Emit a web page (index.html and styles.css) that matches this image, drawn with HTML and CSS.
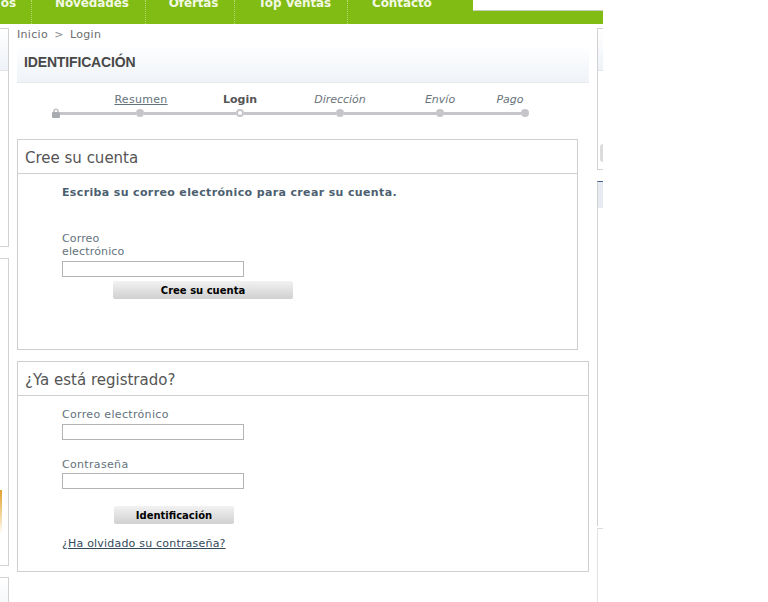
FILE: index.html
```html
<!DOCTYPE html>
<html>
<head>
  <meta charset="utf-8">
  <title>Login</title>
  <link rel="stylesheet" href="styles.css">
</head>
<body>
  <div class="page">
    <div class="nav">
      <a class="nav-item first"><span>os</span></a>
      <a class="nav-item"><span>Novedades</span></a>
      <a class="nav-item"><span>Ofertas</span></a>
      <a class="nav-item"><span>Top Ventas</span></a>
      <a class="nav-item last"><span>Contacto</span></a>
      <div class="search"></div>
    </div>

    <div class="columns">
      <div class="rail left">
        <div class="box b1"><div class="box-head"></div></div>
        <div class="box b2"><div class="thumb"></div></div>
        <div class="box b3"></div>
      </div>

      <div class="main">
        <div class="crumbs">Inicio <i>&gt;</i> Login</div>
        <h1 class="title">IDENTIFICACIÓN</h1>

        <div class="step-labels">
          <a class="step done">Resumen</a>
          <b class="step">Login</b>
          <em class="step">Dirección</em>
          <em class="step">Envío</em>
          <em class="step last-step">Pago</em>
        </div>
        <div class="track">
          <svg class="lock" width="8" height="10" viewBox="0 0 8 10">
            <path d="M2 4.5V3a2 2 0 0 1 4 0v1.5" fill="none" stroke="#a8abb0" stroke-width="1.2"/>
            <rect x="0" y="4" width="8" height="6" rx="1" fill="#a8abb0"/>
          </svg>
          <span class="seg s80"></span><span class="dot"></span>
          <span class="seg s92"></span><span class="dot open"></span>
          <span class="seg s92"></span><span class="dot"></span>
          <span class="seg s92"></span><span class="dot"></span>
          <span class="seg s77"></span><span class="dot"></span>
        </div>

        <div class="panel short">
          <h2 class="panel-head">Cree su cuenta</h2>
          <div class="panel-body">
            <p class="lead">Escriba su correo electrónico para crear su cuenta.</p>
            <label class="field-label narrow">Correo electrónico</label>
            <input class="field" type="text">
            <button class="btn wide">Cree su cuenta</button>
          </div>
        </div>

        <div class="panel">
          <h2 class="panel-head">¿Ya está registrado?</h2>
          <div class="panel-body login">
            <label class="field-label">Correo electrónico</label>
            <input class="field" type="text">
            <label class="field-label second">Contraseña</label>
            <input class="field tight" type="password">
            <button class="btn small">Identificación</button>
            <a class="forgot">¿Ha olvidado su contraseña?</a>
          </div>
        </div>
      </div>

      <div class="rail right">
        <div class="rbox r1"><div class="box-head"></div><div class="side-btn"></div></div>
        <div class="rbox r2"><div class="r2-head"></div></div>
        <div class="rbox r3"></div>
      </div>
    </div>
  </div>
</body>
</html>
```

FILE: styles.css
```css
html, body { margin: 0; padding: 0; background: #fff; }
body { font-family: "DejaVu Sans", Verdana, sans-serif; font-size: 11px; color: #63727c; }
.page { width: 603px; height: 602px; overflow: hidden; }

/* top menu, the page is scrolled a little so the text is cut */
.nav { display: flex; height: 24px; background: #80bc14; overflow: hidden; }
.nav-item { display: block; height: 24px; padding: 0 16px 0 23px; border-right: 1px dotted #b5d970; color: #f2f8e4; font-weight: bold; font-size: 12px; line-height: 14px; letter-spacing: -0.12px; white-space: nowrap; }
.nav-item span { display: block; margin-top: -4px; }
.nav-item.first { width: 16px; padding: 0 15px 0 0; text-align: right; }
.nav-item.last { border-right: 0; padding-left: 24px; }
.search { height: 10px; width: 130px; margin-left: auto; background: #fff; border-bottom: 1px solid #c8d0b8; }

.columns { display: flex; }
.rail { flex: none; }
.rail.left { width: 9px; padding-top: 4px; }
.rail.right { width: 6px; padding-top: 4px; margin-left: 8px; }
.main { flex: none; width: 572px; margin-left: 8px; }

/* side columns, only the edge of them shows */
.box { box-sizing: border-box; border: 1px solid #d2d2d2; border-left: 0; margin-bottom: 11px; }
.box.b1 { height: 219px; }
.box.b2 { height: 308px; padding-top: 231px; }
.box.b3 { height: 40px; border-bottom: 0; background: linear-gradient(#fff, #f0f3f7); }
.box-head { height: 41px; background: linear-gradient(#fff, #eef2f7); border-bottom: 1px solid #e2e2e2; }
.thumb { width: 2px; height: 44px; background: linear-gradient(#e0a030, #f4d8a0 60%, #fff); }

.rbox { box-sizing: border-box; border-left: 1px solid #d2d2d2; }
.r1 { height: 142px; border-top: 1px solid #d2d2d2; border-bottom: 1px solid #d2d2d2; margin-bottom: 11px; }
.side-btn { width: 4px; height: 18px; margin: 73px 0 0 2px; background: #dcdcdc; border-radius: 3px 0 0 3px; }
.r2 { height: 345px; border-top: 1px solid #3f6288; margin-bottom: 2px; }
.r2-head { height: 26px; background: #e9ebf3; }
.r3 { height: 80px; border-top: 1px solid #dcdcdc; border-left-color: #e2e2e2; }

/* breadcrumb and title */
.crumbs { height: 14px; margin-top: 4px; line-height: 14px; color: #6c6c6c; letter-spacing: 0.3px; }
.crumbs i { font-style: normal; color: #8a8a8a; margin: 0 2.5px; }
.title { box-sizing: border-box; height: 38px; margin: 3px 0 0; padding: 8px 0 0 7px; font: bold 14px/18px "Liberation Sans", Arial, sans-serif; letter-spacing: -0.15px; color: #484848; background: linear-gradient(#fff, #eff3f8); border-bottom: 1px solid #e8eaec; }

/* steps */
.step-labels { display: flex; height: 14px; margin-top: 10px; padding-left: 73px; line-height: 14px; color: #666; }
.step { display: block; box-sizing: border-box; width: 100px; text-align: center; }
.step.done { padding-left: 2px; color: #63727c; text-decoration: underline; letter-spacing: 0.3px; }
b.step { color: #555; }
em.step { color: #6a747c; }
.step.last-step { margin-left: -15px; width: 70px; }
.track { display: flex; align-items: center; height: 10px; margin: 1px 0 0 35px; }
.lock { flex: none; margin-top: -1px; }
.seg { flex: none; height: 3px; background: #c6c6ca; }
.s80 { width: 76px; }
.s92 { width: 92px; }
.s77 { width: 77px; }
.dot { flex: none; box-sizing: border-box; width: 8px; height: 8px; border-radius: 50%; background: #c6c6ca; }
.dot.open { background: #fff; border: 2px solid #c6c6ca; }

/* boxes with forms */
.panel { box-sizing: border-box; height: 211px; margin-top: 11px; border: 1px solid #cfcfcf; }
.panel.short { width: 561px; margin-top: 21px; }
.panel-head { box-sizing: border-box; height: 34px; margin: 0; padding: 0 7px; border-bottom: 1px solid #cfcfcf; font-size: 15px; font-weight: normal; line-height: 36px; color: #555; }
.panel-body { padding: 12px 0 0 44px; }
.lead { margin: 0 0 32px; font-weight: bold; line-height: 14px; letter-spacing: 0.36px; color: #4c5f70; }
.field-label { display: block; line-height: 13px; letter-spacing: 0.33px; }
.field-label.narrow { width: 90px; letter-spacing: 0.15px; }
.field-label.second { margin-top: 18px; }
.field { display: block; box-sizing: border-box; width: 182px; height: 16px; margin: 3px 0 0; padding: 0; border: 1px solid #b4b4b4; background: #fff; }
.field.tight { margin-top: 2px; }
.btn { display: block; box-sizing: border-box; height: 18px; padding: 0; border: 0; border-radius: 2px; background: linear-gradient(#f2f2f2, #d0d0d0); font: bold 10px "DejaVu Sans", Verdana, sans-serif; color: #000; }
.btn.wide { width: 180px; margin: 4px 0 0 51px; }
.btn.small { width: 120px; margin: 17px 0 0 52px; }
.forgot { display: block; margin-top: 13px; line-height: 14px; letter-spacing: 0.2px; color: #34495a; text-decoration: underline; }
```
